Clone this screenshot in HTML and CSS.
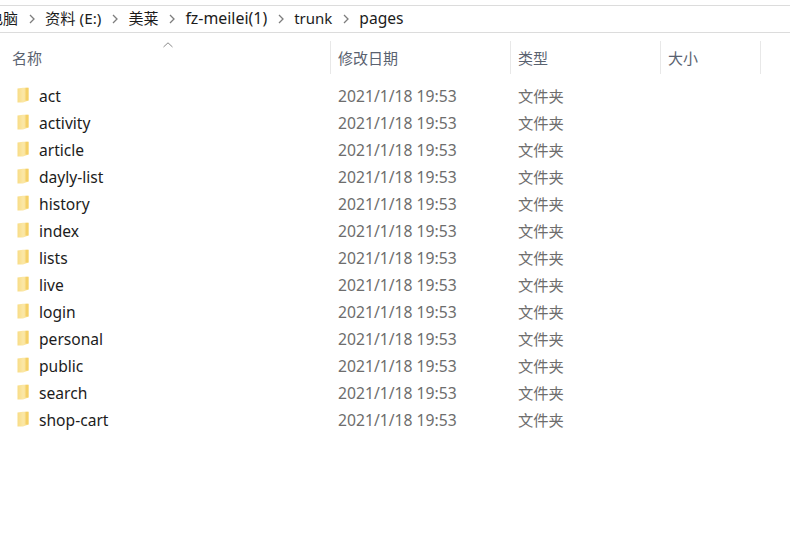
FILE: index.html
```html
<!DOCTYPE html>
<html lang="zh">
<head>
<meta charset="utf-8">
<title>pages</title>
<link rel="stylesheet" href="styles.css">
</head>
<body>
<svg class="defs" width="0" height="0" aria-hidden="true">
  <defs>
    <linearGradient id="fg" x1="0" y1="0" x2="1" y2="0">
      <stop offset="0" stop-color="#f8dc85"/>
      <stop offset="0.5" stop-color="#fbe7a6"/>
      <stop offset="1" stop-color="#f9df8e"/>
    </linearGradient>
    <symbol id="folder" viewBox="0 0 12 16">
      <path d="M0.5 1.5 L6 0.8 L11.5 0.8 L11.5 13.5 L6 15.5 L0.5 15.5 Z" fill="url(#fg)"/>
      <path d="M8.5 0.8 L11.5 0.8 L11.5 13.5 L8.5 13.5 Z" fill="#f5d067"/>
    </symbol>
    <symbol id="chev" viewBox="0 0 8 10">
      <path d="M2 1 L6 5 L2 9" fill="none" stroke="#7d7d7d" stroke-width="1.3"/>
    </symbol>
  </defs>
</svg>
<nav class="crumbs">
  <span class="crumb tight first">此电脑</span>
  <svg class="chev"><use href="#chev"/></svg>
  <span class="crumb drive">资料 (E:)</span>
  <svg class="chev"><use href="#chev"/></svg>
  <span class="crumb tight">美莱</span>
  <svg class="chev"><use href="#chev"/></svg>
  <span class="crumb wide">fz-meilei(1)</span>
  <svg class="chev"><use href="#chev"/></svg>
  <span class="crumb tight">trunk</span>
  <svg class="chev"><use href="#chev"/></svg>
  <span class="crumb">pages</span>
</nav>
<header class="head">
  <svg class="sort" width="10" height="6" viewBox="0 0 10 6"><path d="M0.5 5 L5 0.8 L9.5 5" fill="none" stroke="#8a8a8a" stroke-width="1"/></svg>
  <div class="col">名称</div>
  <div class="col">修改日期</div>
  <div class="col">类型</div>
  <div class="col">大小</div>
</header>
<main class="list">
  <div class="row"><span class="name"><svg class="folder"><use href="#folder"/></svg>act</span><span class="date">2021/1/18 19:53</span><span class="type">文件夹</span></div>
  <div class="row"><span class="name"><svg class="folder"><use href="#folder"/></svg>activity</span><span class="date">2021/1/18 19:53</span><span class="type">文件夹</span></div>
  <div class="row"><span class="name"><svg class="folder"><use href="#folder"/></svg>article</span><span class="date">2021/1/18 19:53</span><span class="type">文件夹</span></div>
  <div class="row"><span class="name"><svg class="folder"><use href="#folder"/></svg>dayly-list</span><span class="date">2021/1/18 19:53</span><span class="type">文件夹</span></div>
  <div class="row"><span class="name"><svg class="folder"><use href="#folder"/></svg>history</span><span class="date">2021/1/18 19:53</span><span class="type">文件夹</span></div>
  <div class="row"><span class="name"><svg class="folder"><use href="#folder"/></svg>index</span><span class="date">2021/1/18 19:53</span><span class="type">文件夹</span></div>
  <div class="row"><span class="name"><svg class="folder"><use href="#folder"/></svg>lists</span><span class="date">2021/1/18 19:53</span><span class="type">文件夹</span></div>
  <div class="row"><span class="name"><svg class="folder"><use href="#folder"/></svg>live</span><span class="date">2021/1/18 19:53</span><span class="type">文件夹</span></div>
  <div class="row"><span class="name"><svg class="folder"><use href="#folder"/></svg>login</span><span class="date">2021/1/18 19:53</span><span class="type">文件夹</span></div>
  <div class="row"><span class="name"><svg class="folder"><use href="#folder"/></svg>personal</span><span class="date">2021/1/18 19:53</span><span class="type">文件夹</span></div>
  <div class="row"><span class="name"><svg class="folder"><use href="#folder"/></svg>public</span><span class="date">2021/1/18 19:53</span><span class="type">文件夹</span></div>
  <div class="row"><span class="name"><svg class="folder"><use href="#folder"/></svg>search</span><span class="date">2021/1/18 19:53</span><span class="type">文件夹</span></div>
  <div class="row"><span class="name"><svg class="folder"><use href="#folder"/></svg>shop-cart</span><span class="date">2021/1/18 19:53</span><span class="type">文件夹</span></div>
</main>
</body>
</html>
```

FILE: styles.css
```css
* { box-sizing: border-box; }
html, body { margin: 0; padding: 0; }
body {
  width: 790px;
  height: 560px;
  overflow: hidden;
  background: #fff;
  color: #1c1c1c;
  font: 15.6px/20px "Noto Sans", "Noto Sans CJK SC", sans-serif;
  padding-top: 5px;
}
.defs { position: absolute; }
.crumbs {
  height: 28px;
  border-top: 1px solid #dcdcdc;
  border-bottom: 1px solid #dcdcdc;
  display: flex;
  align-items: center;
  overflow: hidden;
  white-space: nowrap;
  padding-bottom: 2px;
}
.crumb { flex: none; }
.crumb.tight { font-size: 15px; }
.crumb.drive { font-size: 15.3px; }
.crumb.wide { font-size: 15.9px; }
.crumb.first { margin-left: -27px; }
.chev { width: 8px; height: 10px; flex: none; margin: 1px 9px 0 10px; }
.head {
  position: relative;
  display: grid;
  grid-template-columns: 331px 180px 150px 100px;
  margin-top: 8px;
  height: 33px;
  color: #5a6270;
  font-size: 15px;
}
.col {
  padding-left: 7px;
  display: flex;
  align-items: center;
  border-right: 1px solid #e8e8e8;
}
.col:first-of-type { padding-left: 12px; }
.sort { position: absolute; left: 163px; top: 1px; }
.list { margin-top: 8px; }
.row {
  display: grid;
  grid-template-columns: 338px 180px 100px;
  height: 27px;
  align-items: center;
  color: #6d6d6d;
}
.name {
  display: flex;
  align-items: center;
  color: #1c1c1c;
  padding-left: 17px;
}
.date { font-size: 15.7px; }
.type { font-size: 15.3px; }
.folder { width: 12px; height: 16px; margin-right: 10px; margin-top: -1px; flex: none; }
```
